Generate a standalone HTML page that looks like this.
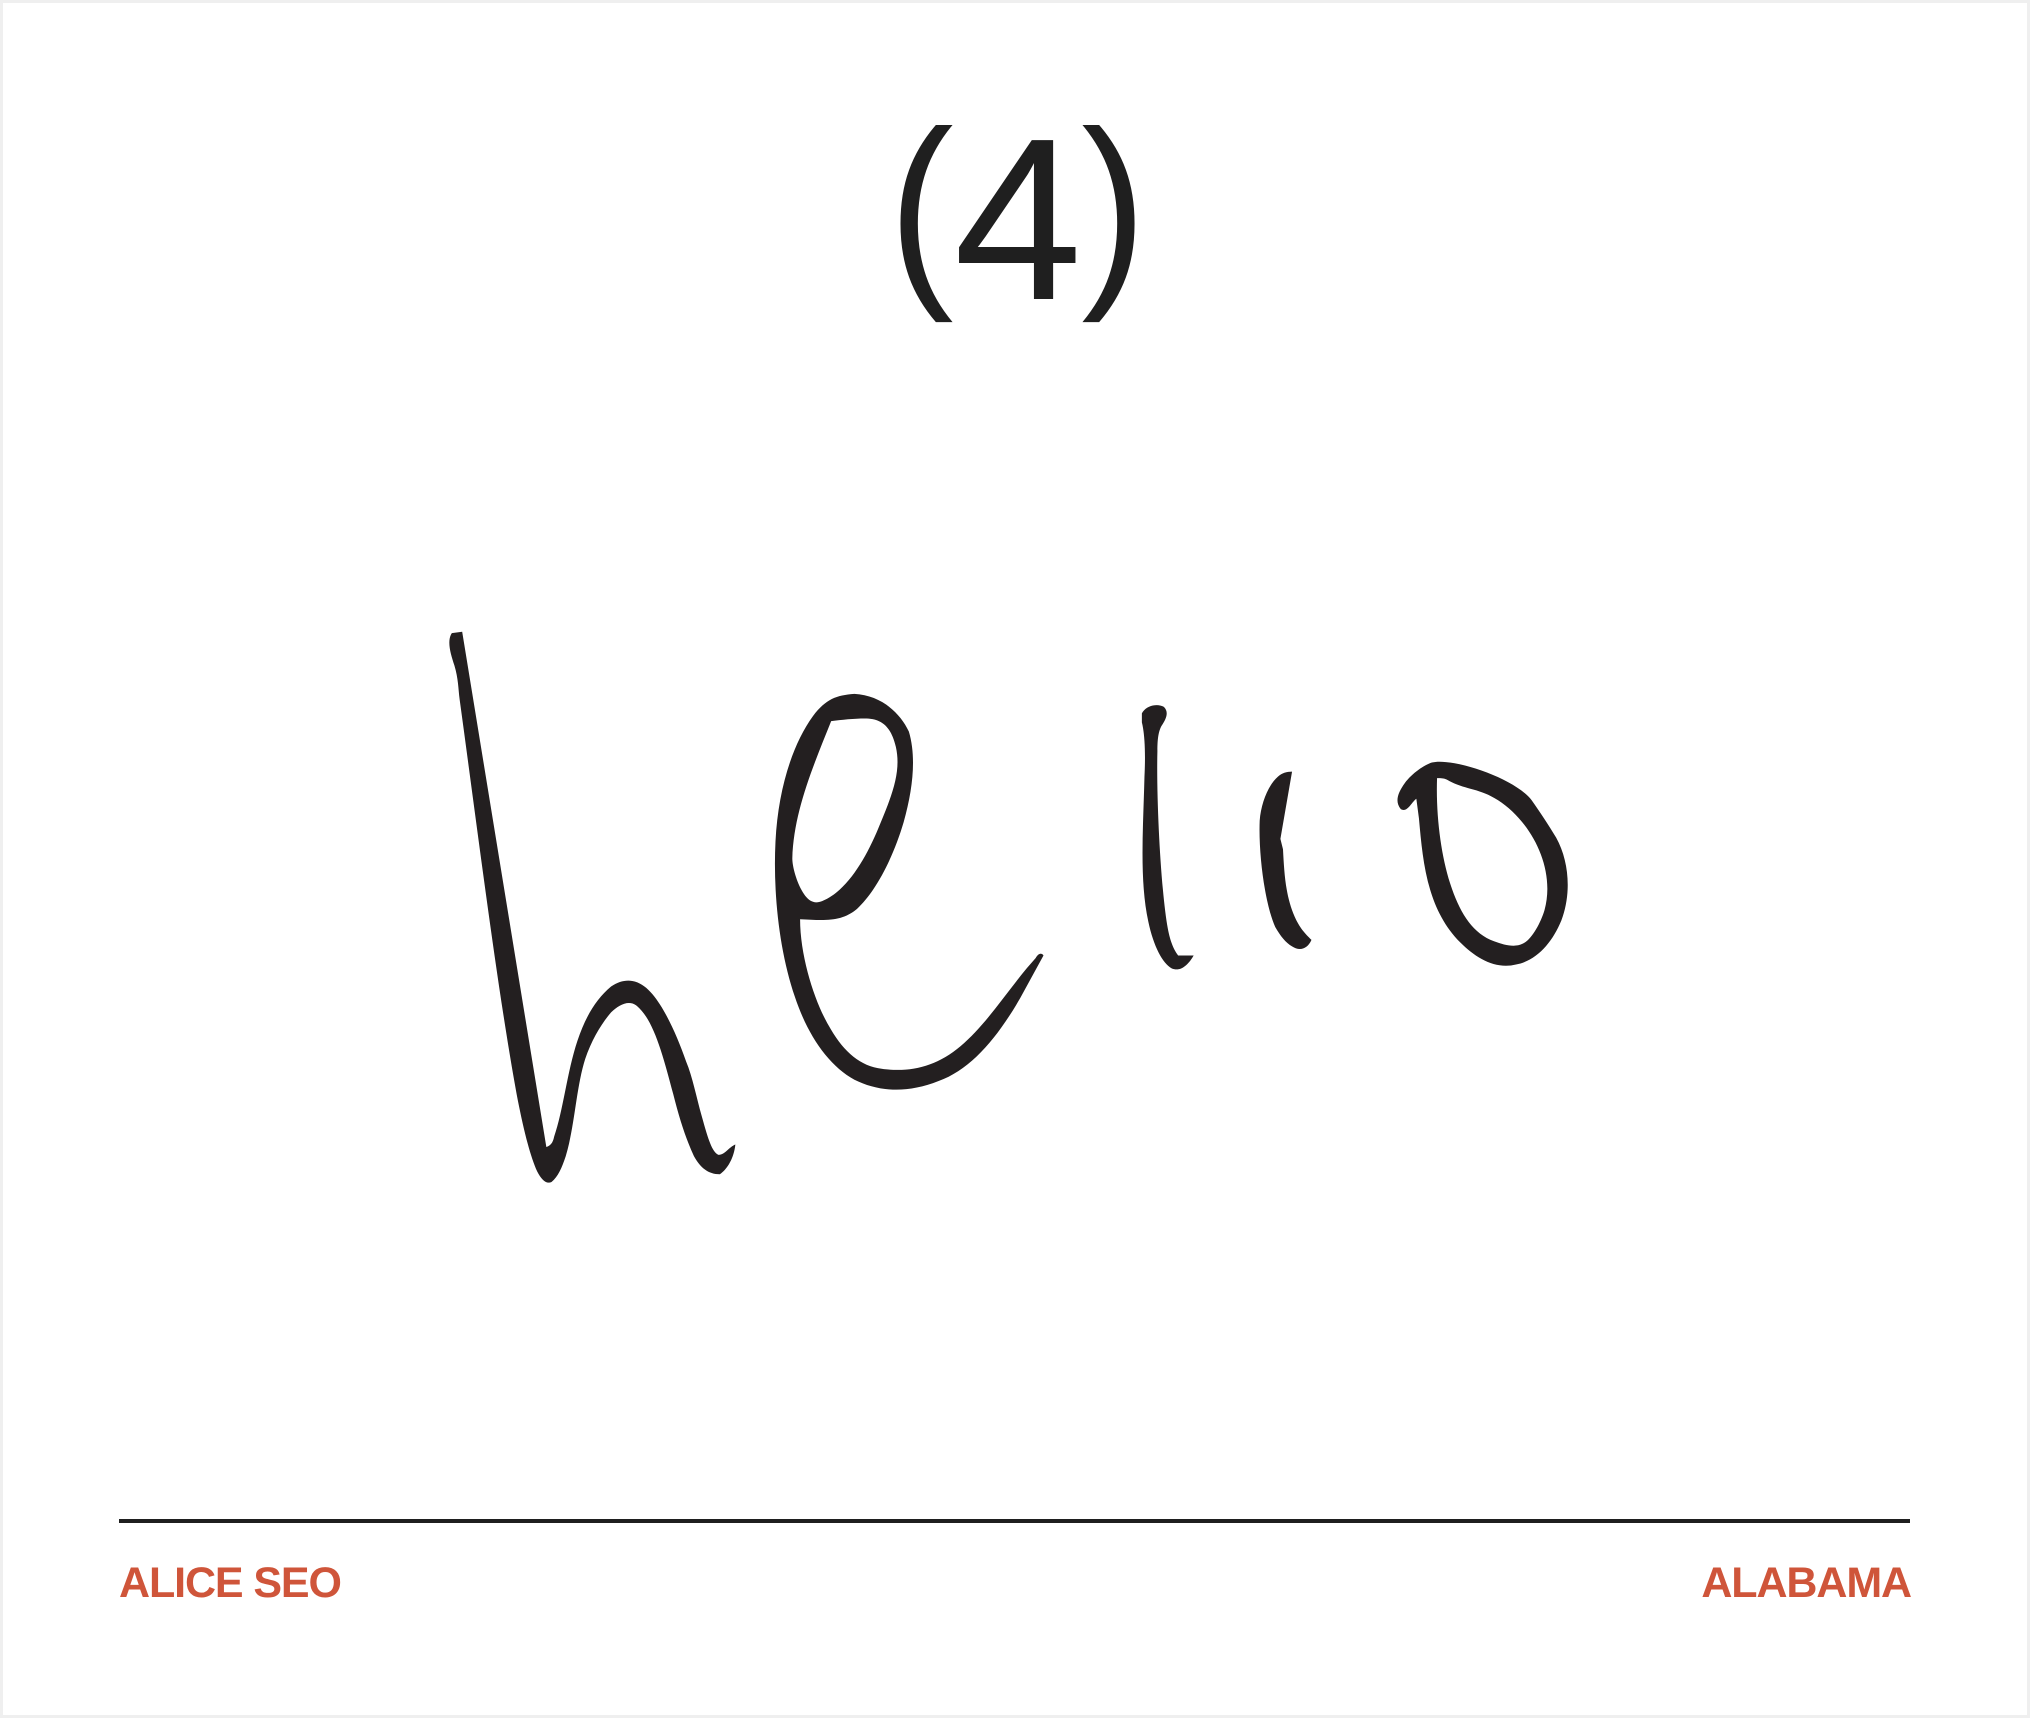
<!DOCTYPE html>
<html><head><meta charset="utf-8"><style>
html,body{margin:0;padding:0;background:#fff;}
body{width:2030px;height:1718px;position:relative;overflow:hidden;font-family:"Liberation Sans",Arial,sans-serif;}
.frame{position:absolute;left:0;top:0;width:2024px;height:1712px;border:3px solid #efefef;}
.title{position:absolute;left:0;width:2030px;top:89px;text-align:center;font-family:"Liberation Sans",Arial,sans-serif;font-size:231px;line-height:260px;color:#1f1f1f;letter-spacing:-6px;}
.p{display:inline-block;transform:translateY(-14px) scale(0.85,0.916);transform-origin:50% 50%;}
.line{position:absolute;left:119px;top:1519px;width:1791px;height:4px;background:#1f1f1f;}
.ft{position:absolute;top:1558px;font-size:43px;line-height:50px;font-weight:bold;color:#cf553a;letter-spacing:-1.1px;}
svg{position:absolute;left:0;top:0;}
</style></head><body>
<div class="frame"></div>
<div class="title"><span class="p">(</span>4<span class="p">)</span></div>
<svg width="2030" height="1718" viewBox="0 0 1568 1327">
<g fill="#231f20" fill-rule="evenodd">
<path d="M357,488 L349,489 C345,495 348,505 351,514 C354,524 354,532 355,540 C370,650 385,770 400,850 C404,870 409,892 415,905 C418,911 422,915 426,913 C431,909 434,902 437,893 C444,870 445,840 452,818 C457,803 465,790 472,782 C478,776 486,772 492,777 C505,788 512,815 520,845 C525,865 530,880 536,893 C541,902 547,907 556,907 C562,903 567,894 568,884 C563,886 560,892 555,892 C550,890 547,880 542,862 C538,848 535,832 530,820 C523,800 514,780 504,768 C495,757 484,754 472,762 C460,772 452,786 446,804 C438,828 435,858 428,878 C427,883 425,885 422,886 Z"/>
<path d="M660,536 C680,537 695,550 702,565 C708,585 705,610 698,635 C690,662 677,688 662,702 C650,712 638,711 618,710 C618,740 630,775 640,792 C650,810 662,822 678,825 C700,829 722,825 742,808 C760,793 775,770 793,748 L800,740 C802,736 805,736 806,738 L788,771 C770,802 750,826 725,835 C700,845 678,843 660,834 C640,823 624,800 614,770 C602,735 597,690 599,650 C601,610 612,575 628,553 C638,540 646,537 660,536 Z M642,557 C650,556 660,555 668,555 C680,555 688,560 692,577 C696,595 690,612 680,636 C670,661 655,688 635,696 C630,698 626,697 622,692 C616,684 612,670 612,663 C613,627 628,592 642,557 Z"/>
<path d="M882,551 C885,545 894,543 899,546 C903,550 901,555 897,561 C895,565 894,570 894,580 C893,620 897,690 902,717 C904,728 907,734 910,738 L922,738 C918,745 912,751 905,748 C898,744 891,731 887,712 C880,680 883,640 884,600 C885,580 884,566 882,558 Z"/>
<path d="M998,596 L989,648 L991,656 C992,675 993,692 1000,708 C1004,717 1008,721 1013,726 C1010,733 1004,735 998,731 C993,728 989,723 985,716 C977,698 972,660 973,634 C974,620 980,606 987,600 C990,597 994,596 998,596 Z"/>
<path d="M1094,617 C1090,620 1087,628 1082,625 C1077,619 1080,612 1085,605 C1091,597 1100,591 1106,589 C1122,585 1170,601 1183,618 C1190,628 1196,637 1202,647 C1212,665 1214,690 1206,711 C1199,728 1187,742 1171,745 C1155,749 1140,740 1128,728 C1102,702 1099,665 1096,632 Z M1110,601 C1117,601 1117,602 1121,604 C1133,610 1143,609 1157,618 C1182,634 1202,670 1193,703 C1190,713 1183,726 1176,729 C1170,732 1162,730 1154,727 C1137,721 1127,704 1120,682 C1113,660 1109,630 1110,601 Z"/>
</g>
</svg>
<div class="line"></div>
<div class="ft" style="left:119px;">ALICE SEO</div>
<div class="ft" style="right:119px;">ALABAMA</div>
</body></html>
